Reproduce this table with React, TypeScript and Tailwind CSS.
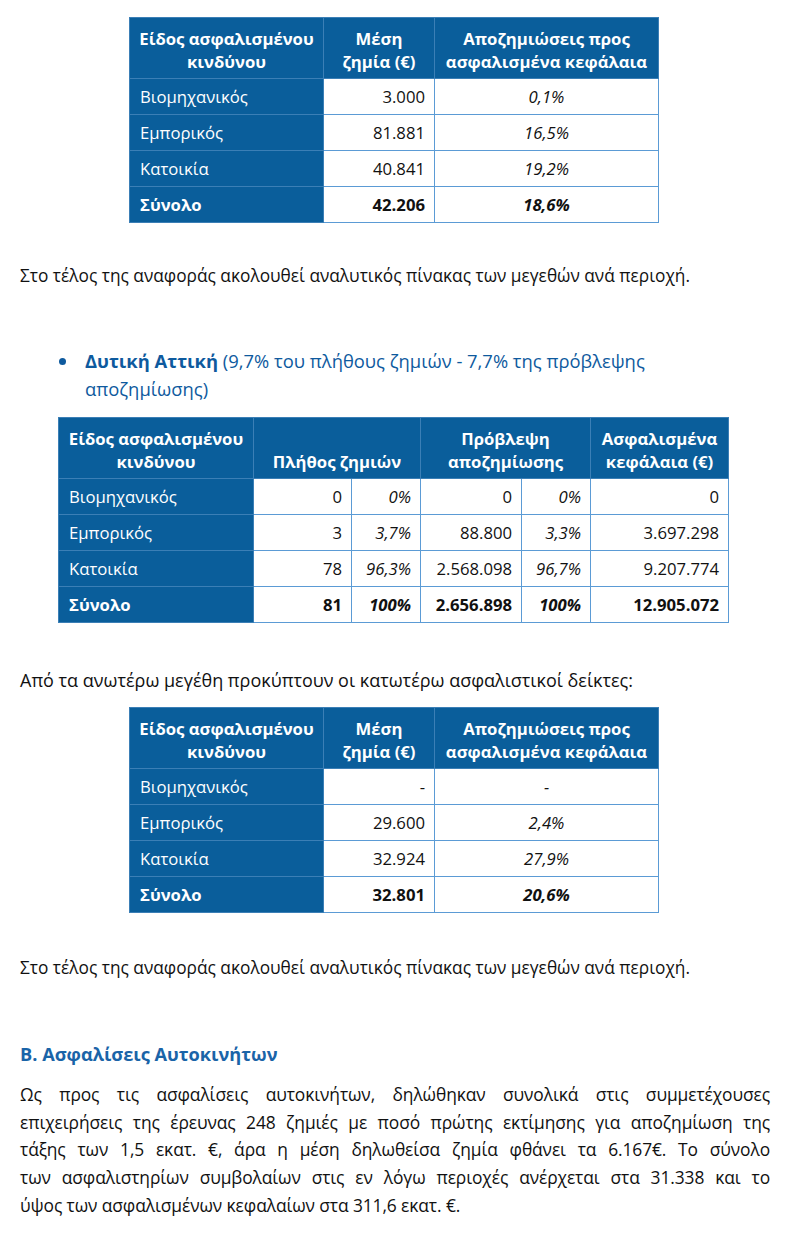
import React from "react"

const font = { fontFamily: '"Open Sans", "Noto Sans", sans-serif' }

const th = "bg-[#0a5e9b] text-white font-bold text-center align-bottom border border-[#3b7fb6] px-2 pb-[5px] leading-[23px]"
const tdHead = "bg-[#0a5e9b] text-white text-left border border-[#3b7fb6] pl-[10px] h-[36px]"
const tdNum = "bg-white text-[#111] text-right border border-[#5b9bd5] pr-[9px] h-[36px]"
const tdPct = "bg-white text-[#111] italic border border-[#5b9bd5] h-[36px]"

type Row = { name: string; a: string; b: string; bold?: boolean }

function SmallTable({ rows }: { rows: Row[] }) {
  return (
    <table className="ml-[129px] w-[529px] border-collapse table-fixed text-[16.7px]">
      <colgroup>
        <col className="w-[194px]" />
        <col className="w-[111px]" />
        <col className="w-[224px]" />
      </colgroup>
      <thead>
        <tr className="h-[61px]">
          <th className={th}>Είδος ασφαλισμένου κινδύνου</th>
          <th className={th}>Μέση ζημία (€)</th>
          <th className={th}>Αποζημιώσεις προς ασφαλισμένα κεφάλαια</th>
        </tr>
      </thead>
      <tbody>
        {rows.map((r) => (
          <tr key={r.name}>
            <td className={tdHead + (r.bold ? " font-bold" : "")}>{r.name}</td>
            <td className={tdNum + (r.bold ? " font-bold" : "")}>{r.a}</td>
            <td className={tdPct + " text-center" + (r.bold ? " font-bold" : "")}>{r.b}</td>
          </tr>
        ))}
      </tbody>
    </table>
  )
}

const wideRows = [
  { name: "Βιομηχανικός", v: ["0", "0%", "0", "0%", "0"] },
  { name: "Εμπορικός", v: ["3", "3,7%", "88.800", "3,3%", "3.697.298"] },
  { name: "Κατοικία", v: ["78", "96,3%", "2.568.098", "96,7%", "9.207.774"] },
  { name: "Σύνολο", v: ["81", "100%", "2.656.898", "100%", "12.905.072"], bold: true },
]

function WideTable() {
  return (
    <table className="ml-[58px] w-[670px] border-collapse table-fixed text-[16.7px]">
      <colgroup>
        <col className="w-[195px]" />
        <col className="w-[98px]" />
        <col className="w-[69px]" />
        <col className="w-[101px]" />
        <col className="w-[69px]" />
        <col className="w-[138px]" />
      </colgroup>
      <thead>
        <tr className="h-[61px]">
          <th className={th}>Είδος ασφαλισμένου κινδύνου</th>
          <th className={th} colSpan={2}>Πλήθος ζημιών</th>
          <th className={th} colSpan={2}>Πρόβλεψη αποζημίωσης</th>
          <th className={th}>Ασφαλισμένα κεφάλαια (€)</th>
        </tr>
      </thead>
      <tbody>
        {wideRows.map((r) => (
          <tr key={r.name}>
            <td className={tdHead + (r.bold ? " font-bold" : "")}>{r.name}</td>
            {r.v.map((x, i) => (
              <td
                key={i}
                className={(i % 2 === 1 ? tdPct + " text-right pr-[9px]" : tdNum) + (r.bold ? " font-bold" : "")}
              >
                {x}
              </td>
            ))}
          </tr>
        ))}
      </tbody>
    </table>
  )
}

const paragraph = [
  "Ως προς τις ασφαλίσεις αυτοκινήτων, δηλώθηκαν συνολικά στις συμμετέχουσες",
  "επιχειρήσεις της έρευνας 248 ζημιές με ποσό πρώτης εκτίμησης για αποζημίωση της",
  "τάξης των 1,5 εκατ. €, άρα η μέση δηλωθείσα ζημία φθάνει τα 6.167€. Το σύνολο",
  "των ασφαλιστηρίων συμβολαίων στις εν λόγω περιοχές ανέρχεται στα 31.338 και το",
]

export default function App() {
  return (
    <div className="w-[800px] min-h-[1240px] bg-white pt-[17px] text-[#111]" style={font}>
      <SmallTable
        rows={[
          { name: "Βιομηχανικός", a: "3.000", b: "0,1%" },
          { name: "Εμπορικός", a: "81.881", b: "16,5%" },
          { name: "Κατοικία", a: "40.841", b: "19,2%" },
          { name: "Σύνολο", a: "42.206", b: "18,6%", bold: true },
        ]}
      />

      <p className="mt-[39px] ml-[20px] text-[17.3px] leading-[28px]">
        Στο τέλος της αναφοράς ακολουθεί αναλυτικός πίνακας των μεγεθών ανά περιοχή.
      </p>

      <div className="mt-[57px] flex text-[18.4px] leading-[28px] text-[#0e5a9e]">
        <div className="w-[85px] pl-[59px] pt-[11px]">
          <span className="block w-[7px] h-[7px] rounded-full bg-[#0e5a9e]" />
        </div>
        <p>
          <span className="font-bold">Δυτική Αττική</span> (9,7% του πλήθους ζημιών - 7,7% της πρόβλεψης
          <br />
          αποζημίωσης)
        </p>
      </div>

      <div className="mt-[14px]">
        <WideTable />
      </div>

      <p className="mt-[43px] ml-[20px] text-[18px] leading-[28px]">
        Από τα ανωτέρω μεγέθη προκύπτουν οι κατωτέρω ασφαλιστικοί δείκτες:
      </p>

      <div className="mt-[13px]">
        <SmallTable
          rows={[
            { name: "Βιομηχανικός", a: "-", b: "-" },
            { name: "Εμπορικός", a: "29.600", b: "2,4%" },
            { name: "Κατοικία", a: "32.924", b: "27,9%" },
            { name: "Σύνολο", a: "32.801", b: "20,6%", bold: true },
          ]}
        />
      </div>

      <p className="mt-[41px] ml-[20px] text-[17.3px] leading-[28px]">
        Στο τέλος της αναφοράς ακολουθεί αναλυτικός πίνακας των μεγεθών ανά περιοχή.
      </p>

      <h2 className="mt-[58px] ml-[20px] text-[18.2px] leading-[28px] font-bold text-[#1a64a8]">
        Β. Ασφαλίσεις Αυτοκινήτων
      </h2>

      <div className="mt-[13px] ml-[20px] w-[750px] text-[17.4px] leading-[27.7px]">
        {paragraph.map((line) => (
          <p key={line} className="text-justify [text-align-last:justify] whitespace-nowrap tracking-[-0.1px]">
            {line}
          </p>
        ))}
        <p className="tracking-[-0.1px]">ύψος των ασφαλισμένων κεφαλαίων στα 311,6 εκατ. €.</p>
      </div>
    </div>
  )
}
